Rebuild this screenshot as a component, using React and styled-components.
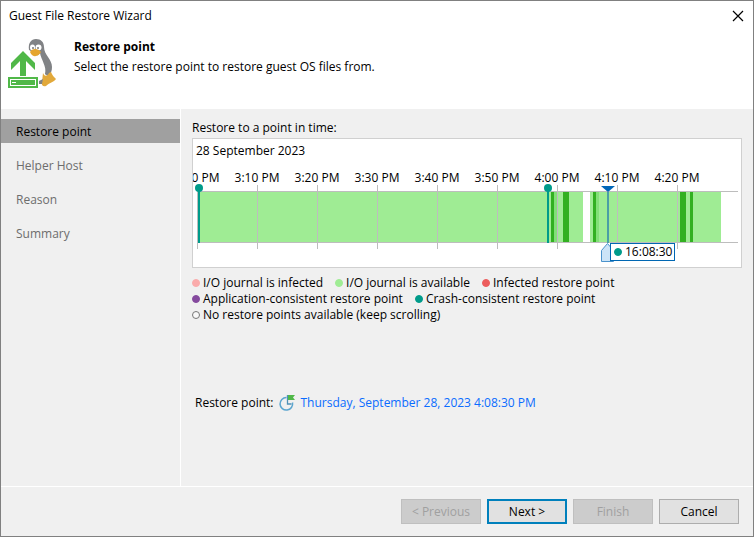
import React from "react";
import styled, { createGlobalStyle } from "styled-components";

const GlobalStyle = createGlobalStyle`
  *, *::before, *::after { box-sizing: border-box; }
  body {
    margin: 0;
    background: #f0f0f0;
    color: #000;
    font-family: "Open Sans", "Noto Sans", sans-serif;
    font-size: 12px;
    line-height: 16px;
  }
  button { font: inherit; color: inherit; }
  h1, h2, p, ul { margin: 0; padding: 0; font: inherit; }
`;

const Window = styled.div`
  display: flex;
  flex-direction: column;
  min-height: 100vh;
  border: 1px solid #808080;
  background: #f0f0f0;
`;

const Header = styled.header`
  background: #fff;
  padding-bottom: 20px;
`;

const TitleBar = styled.div`
  display: flex;
  align-items: center;
  justify-content: space-between;
  height: 30px;
  padding: 0 9px 0 8px;
`;

const CloseButton = styled.button`
  display: flex;
  padding: 0;
  border: 0;
  background: none;
`;

const Banner = styled.div`
  display: flex;
  gap: 16px;
  padding: 7px 6px 0;
`;

const BannerIcon = styled.svg`
  width: 51px;
  height: 51px;
  flex: none;
`;

const BannerText = styled.div`
  display: flex;
  flex-direction: column;
  gap: 4px;
  padding-top: 1px;
`;

const Heading = styled.h2`
  && { font-weight: 700; }
`;

const Body = styled.div`
  display: flex;
  flex: 1;
  border-bottom: 1px solid #fff;
`;

const Steps = styled.nav`
  display: flex;
  flex-direction: column;
  gap: 10px;
  flex: none;
  width: 180px;
  padding-top: 10px;
  border-right: 1px solid #fff;
`;

const Step = styled.button`
  height: 24px;
  padding: 2px 15px 0;
  border: 0;
  text-align: left;
  color: ${(p) => (p.$active ? "#000" : "#6d6d6d")};
  background: ${(p) => (p.$active ? "#a0a0a0" : "transparent")};
`;

const Content = styled.main`
  flex: 1;
  min-width: 0;
  padding: 11px;
`;

const Timeline = styled.section`
  position: relative;
  height: 130px;
  margin-top: 2px;
  border: 1px solid #d0d0d0;
  background: #fff;
  overflow: hidden;
`;

const Day = styled.p`
  && { padding: 4px 3px 0; }
`;

const Hours = styled.div`
  display: flex;
  height: 15px;
  margin: 11px 0 0 -26px;
`;

const Hour = styled.span`
  flex: none;
  width: 60px;
  text-align: center;
  white-space: nowrap;
`;

const Track = styled.svg`
  display: block;
  width: 100%;
  height: 82px;
  overflow: visible;
`;

const TimeTag = styled.output`
  position: absolute;
  left: 417px;
  top: 104px;
  display: flex;
  align-items: center;
  gap: 3px;
  height: 18px;
  padding: 0 2px 0 3px;
  border: 1px solid #0067b3;
  background: #fff;
`;

const Legend = styled.ul`
  && {
    display: flex;
    flex-wrap: wrap;
    column-gap: 12px;
    max-width: 440px;
    margin-top: 7px;
    list-style: none;
  }
`;

const LegendItem = styled.li`
  display: flex;
  align-items: center;
  gap: 3px;
  white-space: nowrap;
`;

const Dot = styled.span`
  width: 8px;
  height: 8px;
  border-radius: 50%;
  background: ${(p) => p.$color};
  border: 1px solid ${(p) => p.$ring || p.$color};
`;

const Selected = styled.div`
  display: flex;
  align-items: center;
  gap: 5px;
  margin-top: 71px;
  padding-left: 3px;
`;

const PointLink = styled.a`
  color: #0a6cff;
  text-decoration: none;
`;

const Footer = styled.footer`
  display: flex;
  justify-content: flex-end;
  gap: 6px;
  padding: 12px 14px;
`;

const Button = styled.button`
  width: 80px;
  height: 25px;
  padding: 1px 0 0;
  border: ${(p) => (p.$primary ? "2px solid #0080bc" : "1px solid #adadad")};
  background: #e1e1e1;
  &:disabled {
    color: #a0a0a0;
    background: #cccccc;
    border-color: #bfbfbf;
  }
`;

const steps = ["Restore point", "Helper Host", "Reason", "Summary"];

const hours = ["3:00 PM", "3:10 PM", "3:20 PM", "3:30 PM", "3:40 PM", "3:50 PM", "4:00 PM", "4:10 PM", "4:20 PM"];

const segments = [
  [5, 385, "#9fec94"],
  [397, 131, "#9fec94"],
  [358, 3, "#32b021"],
  [361, 3, "#82e077"],
  [370, 6, "#32b021"],
  [400, 3, "#32b021"],
  [403, 3, "#82e077"],
  [487, 6, "#32b021"],
  [497, 3, "#32b021"],
];

const legend = [
  ["I/O journal is infected", "#faabab"],
  ["I/O journal is available", "#9fec94"],
  ["Infected restore point", "#ec5c5c"],
  ["Application-consistent restore point", "#854a9e"],
  ["Crash-consistent restore point", "#009b8a"],
  ["No restore points available (keep scrolling)", "#f8f8f8", "#777"],
];

function PenguinUpload() {
  return (
    <BannerIcon viewBox="0 0 51 51" aria-hidden="true">
      <path d="M22 12C21 5 24 1 29 1s8 3 8 8c0 8 8 12 8 20 0 4-1 6-4 9l-5-3c1-9-4-14-8-20z" fill="#808285" />
      <path d="M25 17c2 2 6 1 8-2 1 7 7 13 5 21l-3 2-1 5c-4 4-8 2-8 0z" fill="#fdfdfd" />
      <ellipse cx="25.500" cy="9.500" rx="2.500" ry="3" fill="#fff" />
      <ellipse cx="31.500" cy="9.500" rx="3" ry="3" fill="#fff" />
      <circle cx="26" cy="10" r="1" fill="#777" />
      <circle cx="31" cy="10" r="1" fill="#777" />
      <path d="M23 14c2-4 8-4 11 0-2 4-8 7-11 0z" fill="#e5a52e" />
      <path d="M36 35c1 3 4 4 6 0l2-1c1 3 3 5 5 7-2 3-7 4-10 7-3 1-5-1-4-4z" fill="#e2a93b" />
      <path d="M32 43l4-2-1 5h-3z" fill="#808285" />
      <path d="M16 13L28 25v7l-9-9v15h-6V23l-9 9v-7z" fill="#50b848" />
      <path fillRule="evenodd" d="M1 39h30v11H1zM2 40v9h28v-9z" fill="#50b848" />
      <path fillRule="evenodd" d="M1 39h30v11H1zM3 41v7h26v-7z" fill="#50b848" />
      <path d="M4 42h24v5H4z" fill="#50b848" />
      <path d="M5 44h4v1H5z" fill="#fff" />
    </BannerIcon>
  );
}

function PointIcon() {
  return (
    <svg width="17" height="18" viewBox="0 0 17 18" aria-hidden="true">
      <path d="M7.500 3.500A6.300 6.300 0 1 0 13.500 8.500" fill="none" stroke="#5ba5cf" strokeWidth="1.500" />
      <path d="M8.500 1v9h4" fill="none" stroke="#4f91b8" strokeWidth="1.300" />
      <path d="M9 1h7l-2 2.500 2 2.500H9z" fill="#50b848" />
    </svg>
  );
}

function TimelineTrack() {
  return (
    <Track role="img" aria-label="Journal availability">
      <g shapeRendering="crispEdges">
        {segments.map(([x, w, c]) => (
          <rect key={`${x}-${c}`} x={x} y="7" width={w} height="50" fill={c} />
        ))}
        <svg x="4" y="0" width="541" height="82">
          <rect y="6" width="100%" height="1" fill="#bdbdbd" />
          <rect y="57" width="100%" height="1" fill="#bdbdbd" />
        </svg>
        {hours.map((h, i) => (
          <rect key={h} x={4 + i * 60} width="1" height="64" fill="#bdbdbd" />
        ))}
        <rect x="5" y="3" width="2" height="55" fill="#009b8a" />
        <rect x="354" y="3" width="2" height="55" fill="#009b8a" />
        <rect x="414" y="7" width="2" height="51" fill="#4b9fa6" />
      </g>
      <circle cx="6" cy="3" r="4" fill="#009b8a" />
      <circle cx="355" cy="3" r="4" fill="#009b8a" />
      <path d="M408 1h14l-7 6z" fill="#0067b8" />
      <path d="M408.500 76.500v-11l6-7 6 7v11z" fill="#cce4f7" stroke="#4b93cc" />
    </Track>
  );
}

export default function App() {
  return (
    <>
      <GlobalStyle />
      <Window>
        <Header>
          <TitleBar>
            <h1>Guest File Restore Wizard</h1>
            <CloseButton aria-label="Close">
              <svg width="12" height="12" viewBox="0 0 12 12" aria-hidden="true">
                <path d="M1 1l10 10M11 1L1 11" stroke="#000" strokeWidth="1.200" />
              </svg>
            </CloseButton>
          </TitleBar>
          <Banner>
            <PenguinUpload />
            <BannerText>
              <Heading>Restore point</Heading>
              <p>Select the restore point to restore guest OS files from.</p>
            </BannerText>
          </Banner>
        </Header>
        <Body>
          <Steps aria-label="Wizard steps">
            {steps.map((s, i) => (
              <Step key={s} $active={i === 0} aria-current={i === 0 ? "step" : undefined}>{s}</Step>
            ))}
          </Steps>
          <Content>
            <p id="timeline-label">Restore to a point in time:</p>
            <Timeline aria-labelledby="timeline-label">
              <Day>28 September 2023</Day>
              <Hours>
                {hours.map((h) => <Hour key={h}>{h}</Hour>)}
              </Hours>
              <TimelineTrack />
              <TimeTag><Dot $color="#009b8a" />16:08:30</TimeTag>
            </Timeline>
            <Legend>
              {legend.map(([label, color, ring]) => (
                <LegendItem key={label}><Dot $color={color} $ring={ring} />{label}</LegendItem>
              ))}
            </Legend>
            <Selected>
              <span>Restore point:</span>
              <PointIcon />
              <PointLink href="#restore-point">Thursday, September 28, 2023 4:08:30 PM</PointLink>
            </Selected>
          </Content>
        </Body>
        <Footer>
          <Button disabled>&lt; Previous</Button>
          <Button $primary>Next &gt;</Button>
          <Button disabled>Finish</Button>
          <Button>Cancel</Button>
        </Footer>
      </Window>
    </>
  );
}
